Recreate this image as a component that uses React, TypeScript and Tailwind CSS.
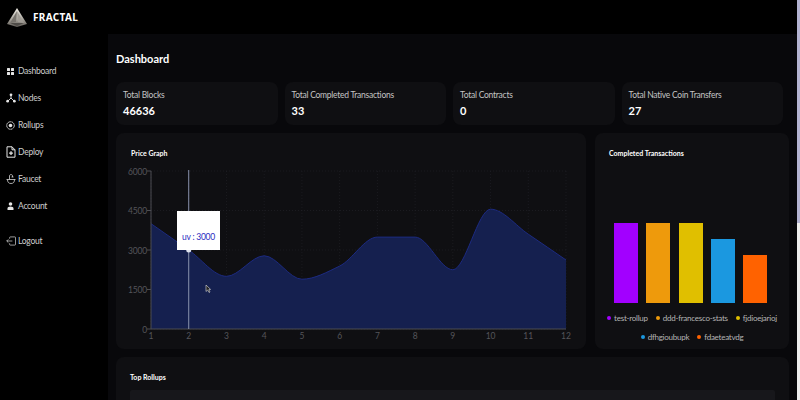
import { Fragment } from 'react';

const UV = [4000, 3000, 2000, 2780, 1890, 2390, 3490, 3490, 2250, 4550, 3600, 2620];
const X0 = 151;
const STEP = 37.73;
const BASE = 329;
const SCALE = 158 / 6000;

const px = (i: number) => X0 + i * STEP;
const py = (v: number) => BASE - v * SCALE;

// monotone-x curve, same maths as recharts' area
function curve(vals: number[]) {
  const ys = vals.map(py);
  const n = ys.length;
  const d = ys.slice(1).map((y, i) => (y - ys[i]) / STEP);
  const t = ys.map((_, i) => {
    if (i === 0) return d[0];
    if (i === n - 1) return d[n - 2];
    if (d[i - 1] * d[i] <= 0) return 0;
    const a = Math.abs(d[i - 1]);
    const b = Math.abs(d[i]);
    return (Math.sign(d[i]) * 2 * a * b) / (a + b);
  });
  let path = `M${px(0)},${ys[0]}`;
  for (let i = 0; i < n - 1; i++) {
    const h = STEP / 3;
    path += ` C${px(i) + h},${ys[i] + t[i] * h} ${px(i + 1) - h},${ys[i + 1] - t[i + 1] * h} ${px(i + 1)},${ys[i + 1]}`;
  }
  return path;
}

function DashIcon() {
  return (
    <svg width="9" height="9" viewBox="0 0 9 9" fill="#e5e5e5">
      <rect x="1" y="1" width="3" height="3" rx="0.5" />
      <rect x="5" y="1" width="3" height="3" rx="0.5" />
      <rect x="1" y="5" width="3" height="3" rx="0.5" />
      <rect x="5" y="5" width="3" height="3" rx="0.5" />
    </svg>
  );
}

function NodesIcon() {
  return (
    <svg width="10" height="10" viewBox="0 0 11 11" fill="#e5e5e5" stroke="#e5e5e5" strokeWidth="1">
      <path d="M5.5 2.5V5.5L2 9M5.5 5.5L9 9" fill="none" />
      <circle cx="5.5" cy="2" r="1.5" stroke="none" />
      <circle cx="1.8" cy="9" r="1.5" stroke="none" />
      <circle cx="9.2" cy="9" r="1.5" stroke="none" />
    </svg>
  );
}

function RollupIcon() {
  return (
    <svg width="9" height="9" viewBox="0 0 10 10" fill="none" stroke="#e5e5e5">
      <circle cx="5" cy="5" r="4.2" strokeWidth="1.1" strokeDasharray="1.6 0.5" />
      <circle cx="5" cy="5" r="2" fill="#e5e5e5" stroke="none" />
    </svg>
  );
}

function DeployIcon() {
  return (
    <svg width="10" height="12" viewBox="0 0 10 12" fill="none" stroke="#e5e5e5" strokeWidth="1">
      <path d="M1 .8H6L9 3.8V11.2H1Z" />
      <path d="M6 .8V3.8H9" />
      <path d="M5 5.2V9M3.1 7.1H6.9" strokeWidth="1.3" />
    </svg>
  );
}

function FaucetIcon() {
  return (
    <svg width="10" height="10" viewBox="0 0 10 10" fill="none" stroke="#d4d4d4" strokeWidth="0.8">
      <path d="M.5 5.5H9.5M1.5 5.5C1.5 8 2.5 9.5 5 9.5S8.5 8 8.5 5.5" />
      <path d="M3.5 5.5V2C3.5 1 4 .6 5 .6S6.5 1 6.5 2V3" />
      <path d="M5.5 3H7.5" />
    </svg>
  );
}

function AccountIcon() {
  return (
    <svg width="7" height="8" viewBox="0 0 7 8" fill="#e5e5e5">
      <circle cx="3.5" cy="2" r="1.8" />
      <path d="M.5 8V6.5C.5 5.3 1.8 4.6 3.5 4.6S6.5 5.3 6.5 6.5V8Z" />
    </svg>
  );
}

function LogoutIcon() {
  return (
    <svg width="10" height="10" viewBox="0 0 11 10" fill="none" stroke="#d4d4d4" strokeWidth="0.8">
      <path d="M4 2.5V1.2C4 .8 4.3 .5 4.7 .5H9.8C10.2 .5 10.5 .8 10.5 1.2V8.8C10.5 9.2 10.2 9.5 9.8 9.5H4.7C4.3 9.5 4 9.2 4 8.8V7.5" />
      <path d="M7 5H.8M2.6 3.2L.8 5L2.6 6.8" />
    </svg>
  );
}

const NAV = [
  { label: 'Dashboard', icon: <DashIcon /> },
  { label: 'Nodes', icon: <NodesIcon /> },
  { label: 'Rollups', icon: <RollupIcon /> },
  { label: 'Deploy', icon: <DeployIcon /> },
  { label: 'Faucet', icon: <FaucetIcon /> },
  { label: 'Account', icon: <AccountIcon /> },
];

const STATS = [
  { label: 'Total Blocks', value: '46636' },
  { label: 'Total Completed Transactions', value: '33' },
  { label: 'Total Contracts', value: '0' },
  { label: 'Total Native Coin Transfers', value: '27' },
];

const BARS = [
  { name: 'test-rollup', h: 'h-[80px]', bar: 'bg-[#a200ff]' },
  { name: 'ddd-francesco-stats', h: 'h-[80px]', bar: 'bg-[#ee9a0c]' },
  { name: 'fjdioejarioj', h: 'h-[80px]', bar: 'bg-[#e0bf00]' },
  { name: 'dfhgioubupk', h: 'h-[64px]', bar: 'bg-[#1b98e0]' },
  { name: 'fdaeteatvdg', h: 'h-[48px]', bar: 'bg-[#ff6200]' },
];

function Logo() {
  return (
    <svg width="20" height="19" viewBox="0 0 20 19">
      <defs>
        <linearGradient id="logoFill" x1="0" y1="0" x2="0" y2="1">
          <stop offset="0" stopColor="#f2efe8" />
          <stop offset="0.6" stopColor="#a8a49c" />
          <stop offset="1" stopColor="#5e5a55" />
        </linearGradient>
      </defs>
      <polygon points="10,0 0,16 10,19 20,16" fill="url(#logoFill)" />
      <polygon points="10,3 9,14 3,15" fill="#77736d" />
      <polygon points="10,3 11,14 17,15" fill="#a09c95" />
      <polygon points="3,15 17,15 10,18" fill="#4e4b47" />
    </svg>
  );
}

function LegendItem({ b }: { b: (typeof BARS)[number] }) {
  return (
    <span className="flex items-center gap-[3px]">
      <span className={`w-[4px] h-[4px] rounded-full ${b.bar}`} />
      {b.name}
    </span>
  );
}

function PriceChart() {
  const line = curve(UV);
  const area = `${line} L${px(11)},${BASE} L${px(0)},${BASE} Z`;
  const yTicks = [0, 1500, 3000, 4500, 6000];
  return (
    <svg width="470" height="216" viewBox="116 133 470 216" className="absolute left-0 top-0">
      {yTicks.map((v) => (
        <line key={v} x1={X0} x2={px(11)} y1={py(v)} y2={py(v)} stroke="#24242a" strokeDasharray="1 2" strokeWidth="0.6" />
      ))}
      {UV.map((_, i) => (
        <line key={i} x1={px(i)} x2={px(i)} y1={171} y2={BASE} stroke="#24242a" strokeDasharray="1 2" strokeWidth="0.6" />
      ))}
      <path d={area} fill="#15204f" />
      <path d={line} fill="none" stroke="#1c2a80" strokeWidth="1" />
      <line x1={X0} x2={X0} y1={171} y2={BASE} stroke="#4c4c52" />
      <line x1={X0} x2={px(11)} y1={BASE} y2={BASE} stroke="#4c4c52" />
      {yTicks.map((v) => (
        <Fragment key={v}>
          <line x1={147} x2={X0} y1={py(v)} y2={py(v)} stroke="#4c4c52" />
          <text x={147} y={py(v) + 3.5} textAnchor="end" fontSize="8.5" letterSpacing="-0.2" fill="#55555a" fontFamily="Lato, sans-serif">{v}</text>
        </Fragment>
      ))}
      {UV.map((_, i) => (
        <text key={i} x={px(i)} y={339} textAnchor="middle" fontSize="8.5" fill="#55555a" fontFamily="Lato, sans-serif">{i + 1}</text>
      ))}
      <line x1={px(1)} x2={px(1)} y1={170} y2={BASE} stroke="#8a93ad" strokeWidth="1" />
      <circle cx={px(1)} cy={py(3000)} r="2.5" fill="#dfe3ee" />
      <path d="M206 285L206 291.5L207.6 290L209 292.5L210 292L208.8 289.6L210.6 289.4Z" fill="#222" stroke="#ddd" strokeWidth="0.6" />
    </svg>
  );
}

export default function App() {
  return (
    <div className="w-[800px] h-[400px] overflow-hidden flex flex-col bg-black text-white font-['Lato',sans-serif] relative">
      <header className="h-[34px] shrink-0 flex items-center pl-[7px] gap-[6px]">
        <Logo />
        <span className="text-[10px] font-bold tracking-[0.35px] font-['Noto_Sans',sans-serif]">FRACTAL</span>
      </header>
      <div className="flex-1 flex min-h-0">
        <aside className="w-[108px] shrink-0 pt-[29px] text-[8.5px] tracking-[-0.25px] text-[#cfcfcf]">
          <nav className="flex flex-col gap-[11px]">
            {NAV.map((n) => (
              <div key={n.label} className="flex items-center h-[16px] pl-[4px]">
                <span className="w-[13px] mr-[1px] flex justify-center">{n.icon}</span>
                <span>{n.label}</span>
              </div>
            ))}
          </nav>
          <div className="flex items-center h-[16px] pl-[4px] mt-[19px]">
            <span className="w-[13px] mr-[1px] flex justify-center"><LogoutIcon /></span>
            <span>Logout</span>
          </div>
        </aside>
        <main className="flex-1 bg-[#08080b] pl-[8px] pt-[16px] min-w-0">
          <h1 className="text-[11px] font-bold leading-[18px]">Dashboard</h1>
          <div className="grid grid-cols-4 gap-[7px] w-[667px] mt-[14px]">
            {STATS.map((s) => (
              <div key={s.label} className="h-[43px] rounded-[8px] bg-[#0f0f12] pl-[7px] pt-[7px]">
                <div className="text-[8.5px] tracking-[-0.25px] leading-[12px] text-[#c4c4c4]">{s.label}</div>
                <div className="text-[11px] leading-[16px] mt-[2px] font-bold">{s.value}</div>
              </div>
            ))}
          </div>
          <div className="flex gap-[9px] mt-[8px]">
            <section className="relative w-[470px] h-[216px] rounded-[8px] bg-[#0f0f12] pl-[15px] pt-[15px]">
              <PriceChart />
              <h2 className="relative text-[7px] font-bold">Price Graph</h2>
              <div className="absolute left-[61px] top-[78px] w-[43px] h-[39px] bg-white flex items-end justify-center pb-[7px] text-[8.5px] tracking-[-0.25px] leading-[11px] text-[#2a2ac0]">uv : 3000</div>
            </section>
            <section className="w-[194px] h-[216px] rounded-[8px] bg-[#0f0f12] px-[14px] pt-[15px] flex flex-col">
              <h2 className="text-[7px] font-bold">Completed Transactions</h2>
              <div className="flex items-end gap-[8.25px] h-[80px] mt-[64px] pl-[5px]">
                {BARS.map((b) => (
                  <div key={b.name} className={`w-[24px] ${b.h} ${b.bar}`} />
                ))}
              </div>
              <div className="mt-[10px] -mx-[6px] flex flex-wrap justify-center gap-x-[8px] gap-y-[9px] text-[8px] tracking-[-0.25px] leading-[10px] text-[#b5b5b5] whitespace-nowrap">
                {BARS.map((b) => (
                  <LegendItem key={b.name} b={b} />
                ))}
              </div>
            </section>
          </div>
          <section className="w-[673px] h-[60px] rounded-[8px] bg-[#0f0f12] mt-[8px] px-[14px] pt-[15px]">
            <h2 className="text-[7px] leading-[11px] font-bold">Top Rollups</h2>
            <div className="h-[30px] mt-[7px] bg-[#17171b] rounded-[2px]" />
          </section>
        </main>
      </div>
      <div className="absolute right-0 top-0 bottom-0 w-[3px] bg-[#eeeeee]">
        <div className="h-[223px] bg-[#b4b4d2]" />
      </div>
    </div>
  );
}
